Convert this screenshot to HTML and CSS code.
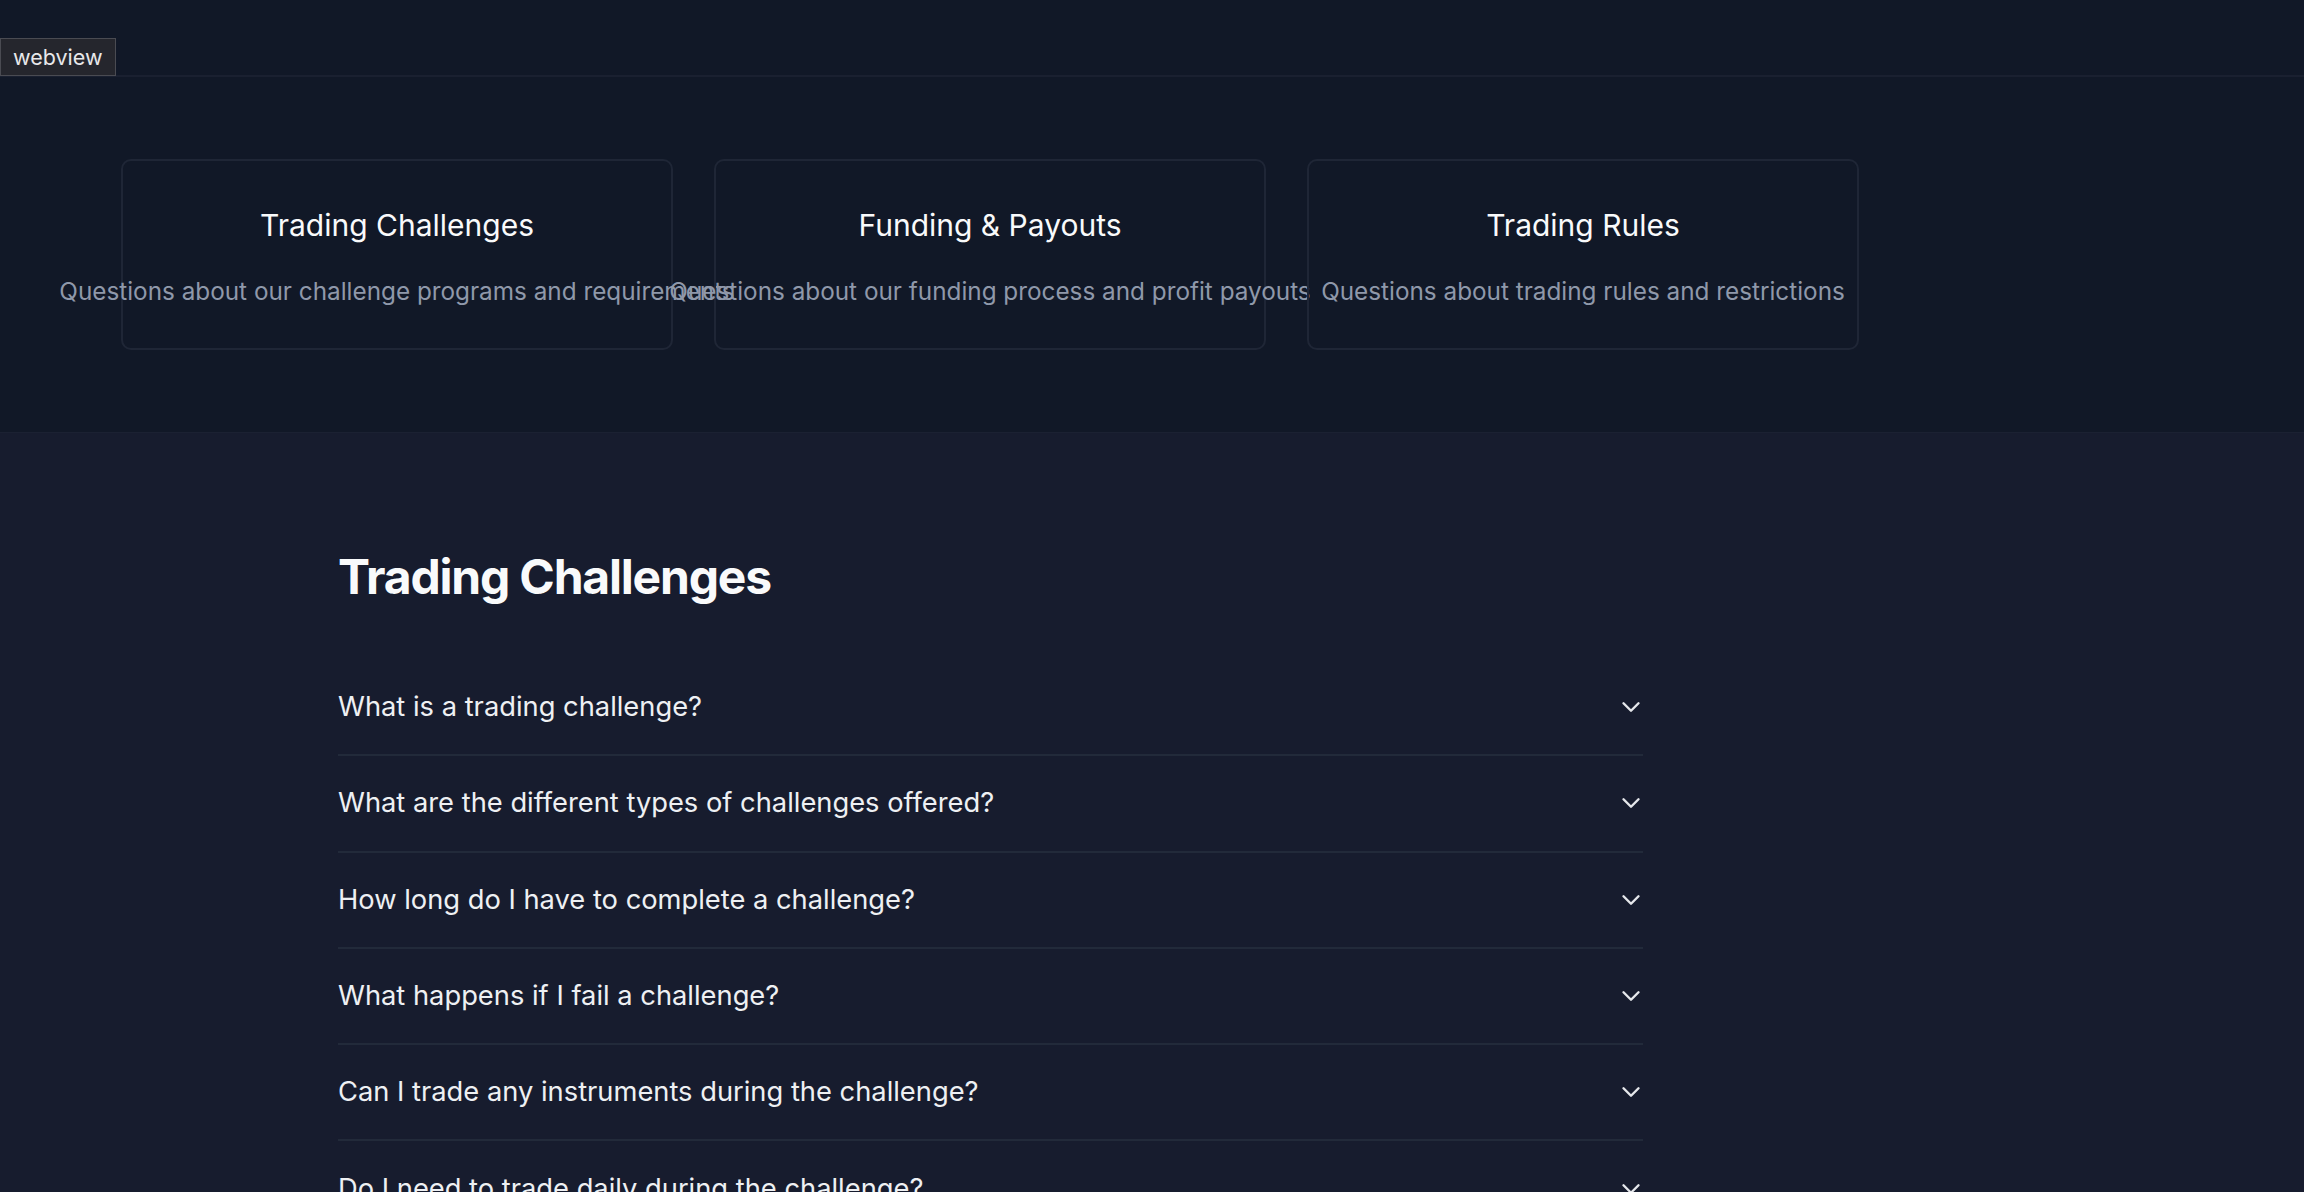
FILE: index.html
```html
<!DOCTYPE html>
<html lang="en">
<head>
<meta charset="utf-8">
<title>FAQ</title>
<link rel="stylesheet" href="styles.css">
</head>
<body>
<header class="topbar">
  <span class="tag">webview</span>
</header>
<section class="categories">
  <div class="card">
    <h3 class="card-title">Trading Challenges</h3>
    <p class="card-sub">Questions about our challenge programs and requirements</p>
  </div>
  <div class="card">
    <h3 class="card-title">Funding &amp; Payouts</h3>
    <p class="card-sub">Questions about our funding process and profit payouts</p>
  </div>
  <div class="card">
    <h3 class="card-title">Trading Rules</h3>
    <p class="card-sub">Questions about trading rules and restrictions</p>
  </div>
</section>
<main class="faq">
  <h2 class="faq-title">Trading Challenges</h2>
  <div class="faq-list">
    <div class="faq-row"><span>What is a trading challenge?</span><svg class="chev" viewBox="0 0 24 24"><path d="M19.5 8.25l-7.5 7.5-7.5-7.5"/></svg></div>
    <div class="faq-row"><span>What are the different types of challenges offered?</span><svg class="chev" viewBox="0 0 24 24"><path d="M19.5 8.25l-7.5 7.5-7.5-7.5"/></svg></div>
    <div class="faq-row"><span>How long do I have to complete a challenge?</span><svg class="chev" viewBox="0 0 24 24"><path d="M19.5 8.25l-7.5 7.5-7.5-7.5"/></svg></div>
    <div class="faq-row"><span>What happens if I fail a challenge?</span><svg class="chev" viewBox="0 0 24 24"><path d="M19.5 8.25l-7.5 7.5-7.5-7.5"/></svg></div>
    <div class="faq-row"><span>Can I trade any instruments during the challenge?</span><svg class="chev" viewBox="0 0 24 24"><path d="M19.5 8.25l-7.5 7.5-7.5-7.5"/></svg></div>
    <div class="faq-row"><span>Do I need to trade daily during the challenge?</span><svg class="chev" viewBox="0 0 24 24"><path d="M19.5 8.25l-7.5 7.5-7.5-7.5"/></svg></div>
  </div>
</main>
</body>
</html>
```
FILE: styles.css
```css
* { box-sizing: border-box; }
html, body { margin: 0; padding: 0; }
body {
  background: #171c2e;
  font-family: Inter, "Noto Sans", sans-serif;
  color: #f3f4f6;
  overflow: hidden;
}
.topbar {
  position: relative;
  height: 77px;
  background: #111827;
  border-bottom: 2px solid #1a2030;
}
.tag {
  position: absolute;
  left: 0;
  top: 38px;
  height: 38px;
  padding: 0 12px;
  display: flex;
  align-items: center;
  background: #25262d;
  border: 1px solid #4a4b52;
  color: #e8e8ea;
  font-size: 21.5px;
}
.categories {
  background: #111827;
  padding: 82px 0 82px 121px;
  display: grid;
  grid-template-columns: repeat(3, 552px);
  gap: 41px;
  border-bottom: 1px solid #1b2132;
}
.card {
  height: 191px;
  border: 2px solid #1f2636;
  border-radius: 10px;
  padding: 41px 0 39px;
  display: flex;
  flex-direction: column;
  align-items: center;
}
.card-title {
  margin: 0 0 25px;
  font-size: 30px;
  line-height: 46px;
  font-weight: 400;
  color: #f9fafb;
  white-space: nowrap;
}
.card-sub {
  margin: 0;
  font-size: 24.3px;
  line-height: 36px;
  color: #8f98aa;
  white-space: nowrap;
}
.faq {
  padding: 120px 0 0 338px;
}
.faq-title {
  margin: 0 0 59px;
  font-size: 48px;
  line-height: 48px;
  font-weight: 700;
  letter-spacing: -1.2px;
  color: #f9fafb;
}
.faq-list {
  width: 1305px;
}
.faq-row {
  display: flex;
  justify-content: space-between;
  align-items: center;
  padding: 31.15px 0;
  border-bottom: 2px solid #222a3a;
  font-size: 27.3px;
  line-height: 32px;
  color: #eef0f3;
}
.chev {
  width: 24px;
  height: 24px;
  fill: none;
  stroke: #e5e7eb;
  stroke-width: 2.4;
  stroke-linecap: round;
  stroke-linejoin: round;
}
```
